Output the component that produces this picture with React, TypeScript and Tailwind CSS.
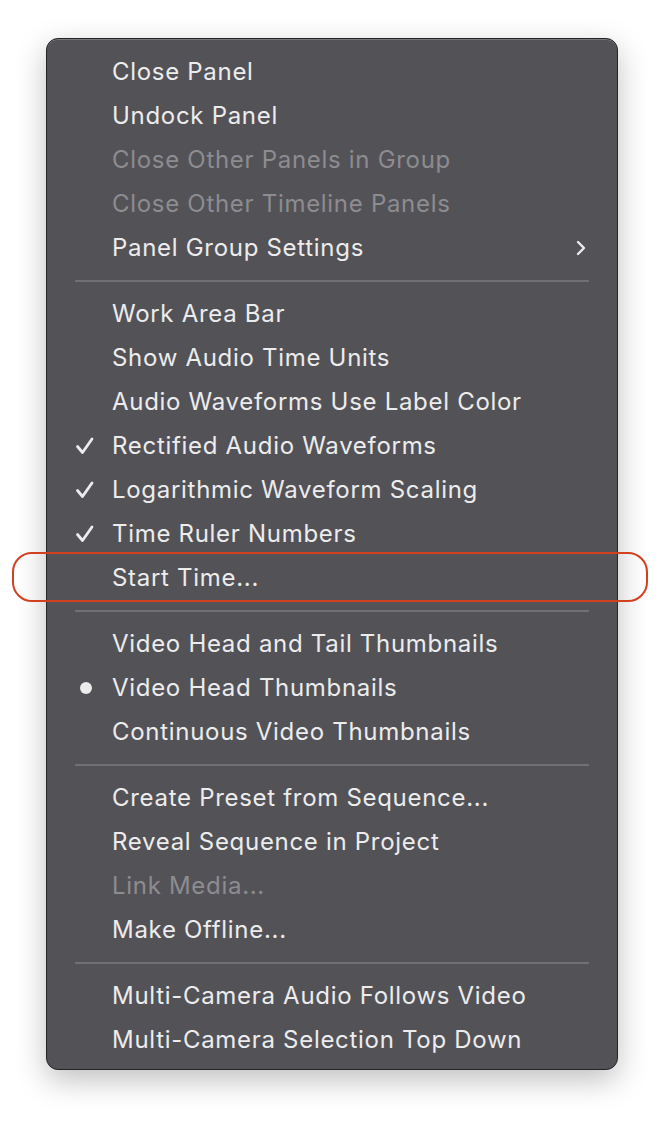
import React from "react";

type Item = { label: string; disabled?: boolean; check?: boolean; dot?: boolean; sub?: boolean };

const groups: Item[][] = [
  [
    { label: "Close Panel" },
    { label: "Undock Panel" },
    { label: "Close Other Panels in Group", disabled: true },
    { label: "Close Other Timeline Panels", disabled: true },
    { label: "Panel Group Settings", sub: true },
  ],
  [
    { label: "Work Area Bar" },
    { label: "Show Audio Time Units" },
    { label: "Audio Waveforms Use Label Color" },
    { label: "Rectified Audio Waveforms", check: true },
    { label: "Logarithmic Waveform Scaling", check: true },
    { label: "Time Ruler Numbers", check: true },
    { label: "Start Time..." },
  ],
  [
    { label: "Video Head and Tail Thumbnails" },
    { label: "Video Head Thumbnails", dot: true },
    { label: "Continuous Video Thumbnails" },
  ],
  [
    { label: "Create Preset from Sequence..." },
    { label: "Reveal Sequence in Project" },
    { label: "Link Media...", disabled: true },
    { label: "Make Offline..." },
  ],
  [
    { label: "Multi-Camera Audio Follows Video" },
    { label: "Multi-Camera Selection Top Down" },
  ],
];

function Row({ item }: { item: Item }) {
  return (
    <div className="relative flex h-[44px] items-center">
      <div className="flex w-[65px] shrink-0 items-center">
        {item.check && (
          <svg width="20" height="20" viewBox="0 0 20 20" className="ml-[28px]">
            <path d="M2.5 10.5 L7.5 16.5 L17 3" fill="none" stroke="#ececec" strokeWidth="2.8" strokeLinecap="round" strokeLinejoin="round" />
          </svg>
        )}
        {item.dot && <div className="ml-[33px] h-[12px] w-[12px] rounded-full bg-[#ececec]" />}
      </div>
      <span className={item.disabled ? "text-[#8d8c91]" : "text-[#ececed]"}>{item.label}</span>
      {item.sub && (
        <svg width="12" height="16" viewBox="0 0 12 16" className="absolute right-[30px] top-[14px]">
          <path d="M3 2 L9 8 L3 14" fill="none" stroke="#ececec" strokeWidth="2.4" strokeLinecap="round" strokeLinejoin="round" />
        </svg>
      )}
    </div>
  );
}

export default function App() {
  return (
    <div
      className="relative h-[1124px] w-[664px] overflow-hidden bg-white pt-[38px] pl-[46px]"
      style={{ fontFamily: "Inter, 'Noto Sans', sans-serif" }}
    >
      <div className="w-[572px] h-[1032px] rounded-[12px] border border-[#232325] bg-[#535257] pt-[11px] pb-[8px] text-[24px] tracking-[0.7px] shadow-[0_10px_30px_rgba(0,0,0,0.25),inset_0_1px_0_#7a797e]">
        {groups.map((g, gi) => (
          <div key={gi}>
            {gi > 0 && <div className="mx-[28px] my-[10px] h-[2px] bg-[#706f74]" />}
            {g.map((it, i) => (
              <Row key={i} item={it} />
            ))}
          </div>
        ))}
      </div>
      <div className="absolute left-[12px] top-[552px] h-[50px] w-[636px] rounded-[20px] border-2 border-[#d2401f]" />
    </div>
  );
}
